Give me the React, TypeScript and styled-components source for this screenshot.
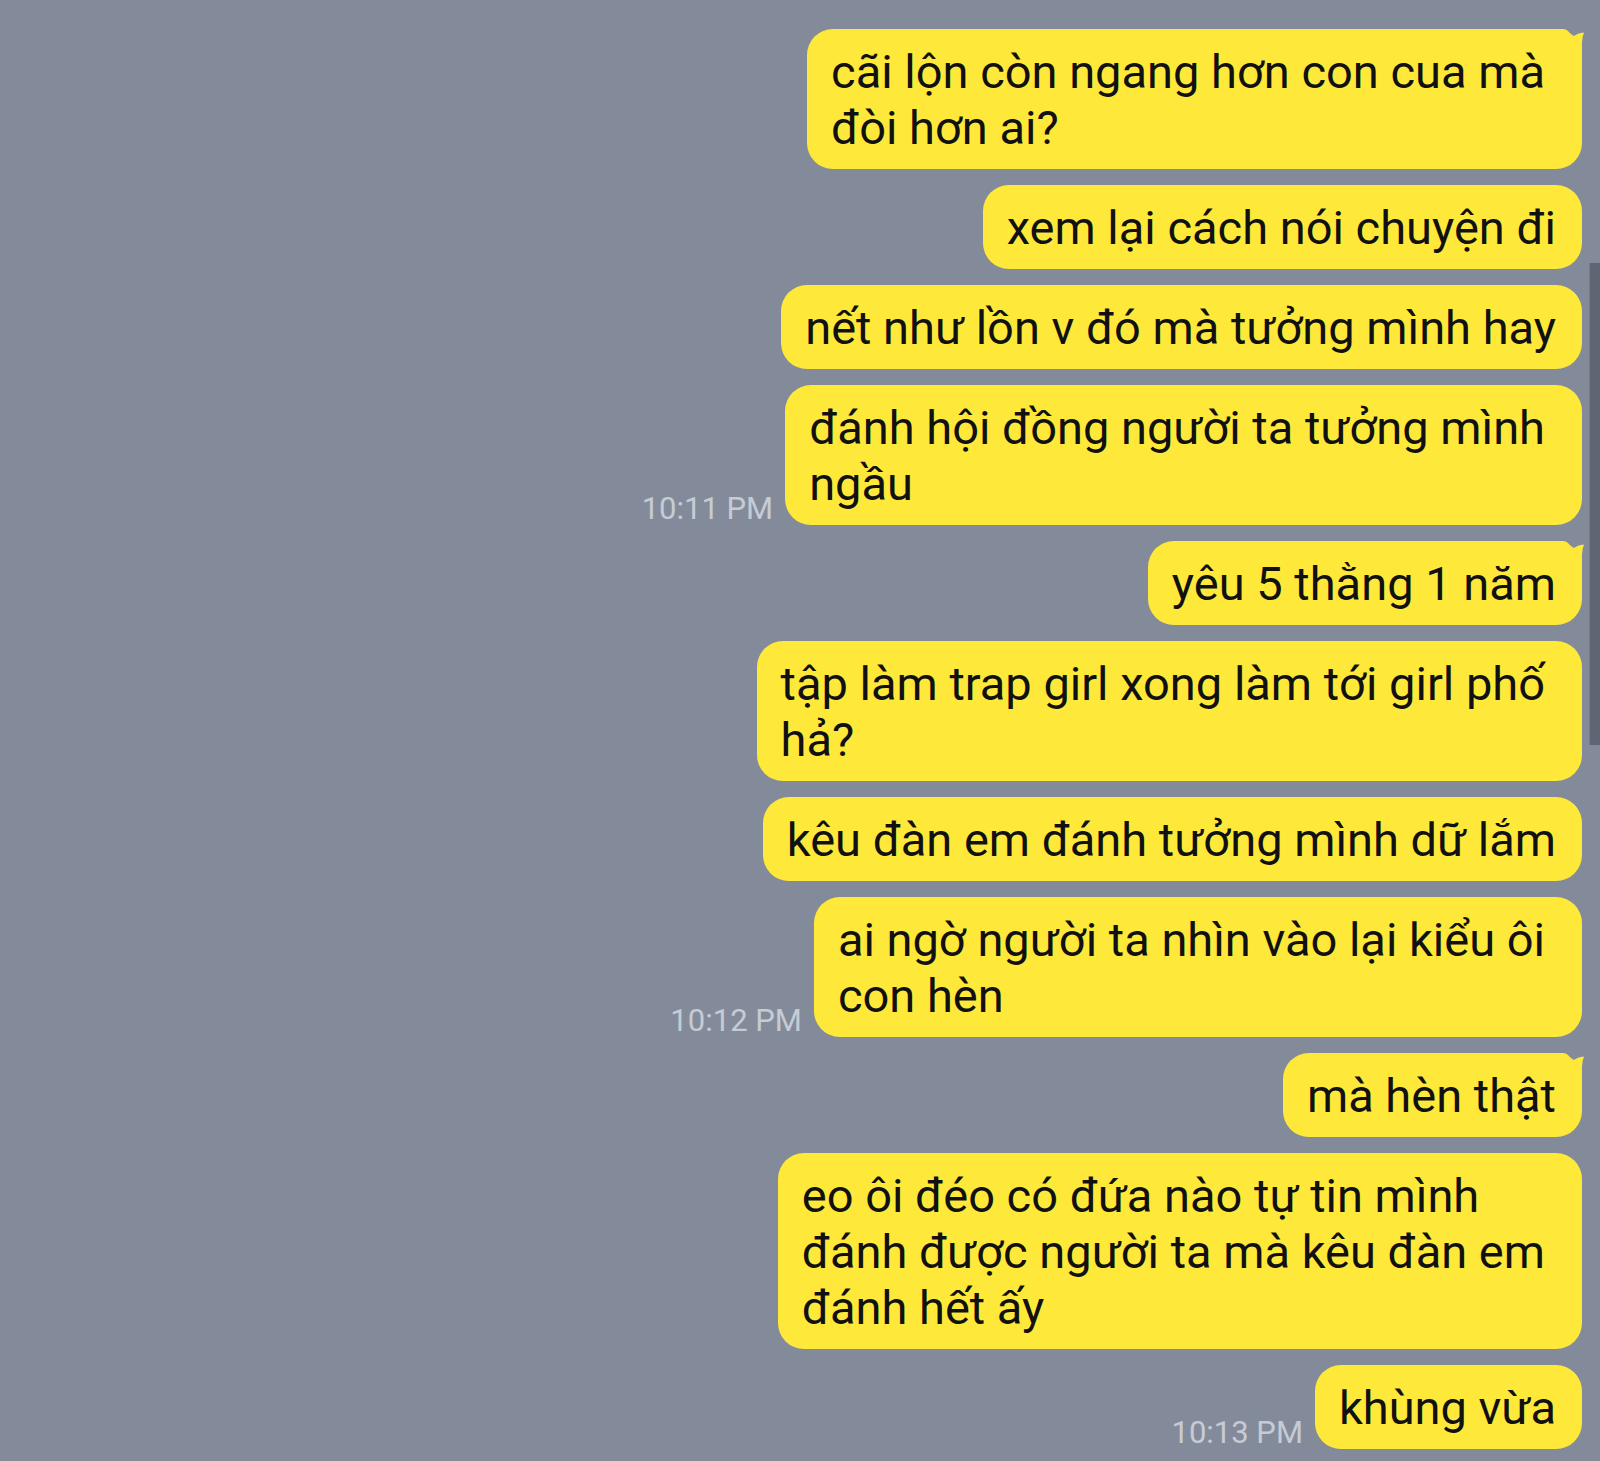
import React from "react";
import styled, { createGlobalStyle } from "styled-components";

const Global = createGlobalStyle`
  html, body { margin: 0; padding: 0; }
  body { background: #838b9b; font-family: Roboto, "Noto Sans", "Liberation Sans", sans-serif; }
`;

const Screen = styled.div`
  position: relative;
  width: 1600px;
  height: 1461px;
  overflow: hidden;
  background: #838b9b;
  box-sizing: border-box;
  padding: 29px 18px 0 0;
  display: flex;
  flex-direction: column;
  gap: 16px;
`;

const Row = styled.div`
  display: flex;
  justify-content: flex-end;
  align-items: flex-end;
  gap: 12px;
`;

const Time = styled.span`
  font-family: Roboto, "Noto Sans", sans-serif;
  font-size: 31px;
  line-height: 34px;
  color: #c6cbd4;
  margin-bottom: -1px;
  white-space: nowrap;
`;

const Bubble = styled.div<{ $multi?: boolean }>`
  position: relative;
  background: #fee93a;
  color: #111;
  font-family: Roboto, "Noto Sans", "Liberation Sans", sans-serif;
  font-size: 47px;
  line-height: 56px;
  padding: 15px ${(p) => (p.$multi ? 37 : 26)}px 13px 24px;
  border-radius: 26px;
  white-space: nowrap;
`;

const Tail = styled.svg`
  position: absolute;
  top: 0;
  right: -4px;
  width: 30px;
  height: 30px;
  overflow: visible;
`;

const ScrollThumb = styled.div`
  position: absolute;
  right: 0;
  top: 263px;
  width: 10px;
  height: 482px;
  background: #5e6573;
  border-left: 1px solid #747b89;
`;

type Msg = { lines: string[]; tail?: boolean; time?: string };

const messages: Msg[] = [
  { lines: ["cãi lộn còn ngang hơn con cua mà", "đòi hơn ai?"], tail: true },
  { lines: ["xem lại cách nói chuyện đi"] },
  { lines: ["nết như lồn v đó mà tưởng mình hay"] },
  { lines: ["đánh hội đồng người ta tưởng mình", "ngầu"], time: "10:11 PM" },
  { lines: ["yêu 5 thằng 1 năm"], tail: true },
  { lines: ["tập làm trap girl xong làm tới girl phố", "hả?"] },
  { lines: ["kêu đàn em đánh tưởng mình dữ lắm"] },
  { lines: ["ai ngờ người ta nhìn vào lại kiểu ôi", "con hèn"], time: "10:12 PM" },
  { lines: ["mà hèn thật"], tail: true },
  {
    lines: [
      "eo ôi đéo có đứa nào tự tin mình",
      "đánh được người ta mà kêu đàn em",
      "đánh hết ấy",
    ],
  },
  { lines: ["khùng vừa"], time: "10:13 PM" },
];

export default function App() {
  return (
    <>
      <Global />
      <Screen>
        {messages.map((m, i) => (
          <Row key={i}>
            {m.time && <Time>{m.time}</Time>}
            <Bubble $multi={m.lines.length > 1}>
              {m.tail && (
                <Tail viewBox="-26 0 30 30">
                  <path
                    d="M -26 0 L -19 0 Q -13 0 -10 8.5 Q -5 4 2 3.5 Q 0 8 0 14 L 0 30 L -26 30 Z"
                    fill="#fee93a"
                  />
                </Tail>
              )}
              {m.lines.map((l, j) => (
                <React.Fragment key={j}>
                  {j > 0 && <br />}
                  {l}
                </React.Fragment>
              ))}
            </Bubble>
          </Row>
        ))}
        <ScrollThumb />
      </Screen>
    </>
  );
}
